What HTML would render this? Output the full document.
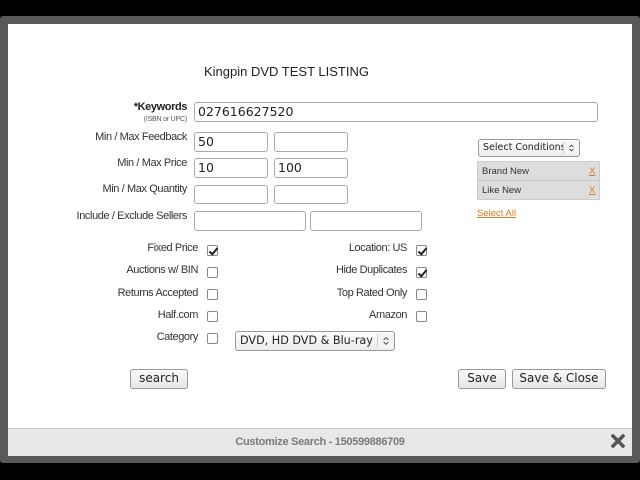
<!DOCTYPE html>
<html><head><meta charset="utf-8"><style>
*{margin:0;padding:0;box-sizing:border-box}
body{width:640px;height:480px;background:#000;position:relative;overflow:hidden;font-family:"Liberation Sans",sans-serif;font-size:11px;color:#333}
.frame{position:absolute;left:0;top:16px;width:640px;height:447px;background:#595959;border-radius:3px}
.win{position:absolute;left:8px;top:24px;width:624px;height:432px;background:#fff}
.foot{position:absolute;left:8px;top:428px;width:624px;height:28px;background:#e8e8e8;border-top:1px solid #ccc;text-align:center;color:#7a7a7a;font-weight:bold;font-size:11px;line-height:27px;letter-spacing:-0.3px}
.a{position:absolute}
.lbl{position:absolute;text-align:right;white-space:nowrap;letter-spacing:-0.4px}
.in{position:absolute;border:1px solid #aaa;border-radius:3px;background:#fff;font-family:"DejaVu Sans",sans-serif;font-size:12.5px;color:#222;padding-left:3px;line-height:17px}
.cb{position:absolute;width:11px;height:11px;border:1px solid #888;border-radius:2px;background:#fff}
.cb.c::after{content:"";position:absolute;left:3px;top:0px;width:3px;height:7px;border:solid #222;border-width:0 2px 2px 0;transform:rotate(40deg)}
.btn{position:absolute;border:1px solid #999;border-radius:3px;background:linear-gradient(#fafafa,#e6e6e6);font-family:"DejaVu Sans",sans-serif;font-size:12px;color:#222;text-align:center;line-height:17px}
.sel{position:absolute;border:1px solid #999;border-radius:3px;background:linear-gradient(#fdfdfd,#ececec);font-family:"DejaVu Sans",sans-serif;color:#222;padding-left:4px;white-space:nowrap;overflow:hidden}
.sel svg{position:absolute;right:0;top:2px;border-left:1px solid #ccc;background:#f4f4f4}
</style></head><body>
<div class="frame"></div>
<div class="win"></div>
<div class="foot">Customize Search - 150599886709</div>
<svg class="a" style="left:611px;top:434px" width="14" height="14" viewBox="0 0 14 14"><path d="M2 2L12 12M12 2L2 12" stroke="#555" stroke-width="3.5" stroke-linecap="square"/></svg>

<div class="a" style="left:204px;top:64px;font-size:13px;color:#222">Kingpin DVD TEST LISTING</div>

<div class="lbl" style="right:453px;top:101px;font-weight:bold;font-size:11px;color:#222">*Keywords</div>
<div class="lbl" style="right:453px;top:116px;font-size:7px;color:#555;letter-spacing:-0.2px">(ISBN or UPC)</div>
<div class="in" style="left:194px;top:102px;width:404px;height:20px">027616627520</div>

<div class="lbl" style="right:453px;top:131px">Min / Max Feedback</div>
<div class="in" style="left:194px;top:132px;width:74px;height:20px">50</div>
<div class="in" style="left:274px;top:132px;width:74px;height:20px"></div>

<div class="lbl" style="right:453px;top:157px">Min / Max Price</div>
<div class="in" style="left:194px;top:158px;width:74px;height:20px">10</div>
<div class="in" style="left:274px;top:158px;width:74px;height:20px">100</div>

<div class="lbl" style="right:453px;top:183px">Min / Max Quantity</div>
<div class="in" style="left:194px;top:185px;width:74px;height:19px"></div>
<div class="in" style="left:274px;top:185px;width:74px;height:19px"></div>

<div class="lbl" style="right:453px;top:210px">Include / Exclude Sellers</div>
<div class="in" style="left:194px;top:211px;width:112px;height:20px"></div>
<div class="in" style="left:310px;top:211px;width:112px;height:20px"></div>

<div class="sel" style="left:478px;top:139px;width:102px;height:18px;font-size:9.5px;line-height:16px">Select Conditions<svg width="16" height="12" viewBox="0 0 16 12"><path d="M6 5L8 3L10 5M6 7L8 9L10 7" fill="none" stroke="#444" stroke-width="1"/></svg></div>
<div class="a" style="left:477px;top:161px;width:123px;height:39px;background:#ddd;border:1px solid #ccc"></div>
<div class="a" style="left:478px;top:180px;width:121px;height:1px;background:#c4c4c4"></div>
<div class="a" style="left:482px;top:166px;font-size:9.5px;color:#333">Brand New</div>
<div class="a" style="left:589px;top:166px;font-size:9.5px;color:#e07a1f;text-decoration:underline">X</div>
<div class="a" style="left:482px;top:185px;font-size:9.5px;color:#333">Like New</div>
<div class="a" style="left:589px;top:185px;font-size:9.5px;color:#e07a1f;text-decoration:underline">X</div>
<div class="a" style="left:477px;top:208px;font-size:9.5px;color:#e07a1f;text-decoration:underline">Select All</div>

<div class="lbl" style="right:442px;top:242px">Fixed Price</div><div class="cb c" style="left:207px;top:245px"></div>
<div class="lbl" style="right:442px;top:264px">Auctions w/ BIN</div><div class="cb" style="left:207px;top:267px"></div>
<div class="lbl" style="right:442px;top:287px">Returns Accepted</div><div class="cb" style="left:207px;top:289px"></div>
<div class="lbl" style="right:442px;top:309px">Half.com</div><div class="cb" style="left:207px;top:311px"></div>
<div class="lbl" style="right:442px;top:331px">Category</div><div class="cb" style="left:207px;top:333px"></div>

<div class="lbl" style="right:233px;top:242px">Location: US</div><div class="cb c" style="left:416px;top:245px"></div>
<div class="lbl" style="right:233px;top:264px">Hide Duplicates</div><div class="cb c" style="left:416px;top:267px"></div>
<div class="lbl" style="right:233px;top:287px">Top Rated Only</div><div class="cb" style="left:416px;top:289px"></div>
<div class="lbl" style="right:233px;top:309px">Amazon</div><div class="cb" style="left:416px;top:311px"></div>

<div class="sel" style="left:235px;top:331px;width:160px;height:20px;font-size:11.2px;line-height:18px">DVD, HD DVD &amp; Blu-ray<svg width="17" height="14" viewBox="0 0 17 14"><path d="M6 6L8.5 3.5L11 6M6 8L8.5 10.5L11 8" fill="none" stroke="#444" stroke-width="1"/></svg></div>

<div class="btn" style="left:130px;top:369px;width:58px;height:20px">search</div>
<div class="btn" style="left:458px;top:369px;width:48px;height:20px">Save</div>
<div class="btn" style="left:512px;top:369px;width:94px;height:20px">Save &amp; Close</div>
</body></html>
